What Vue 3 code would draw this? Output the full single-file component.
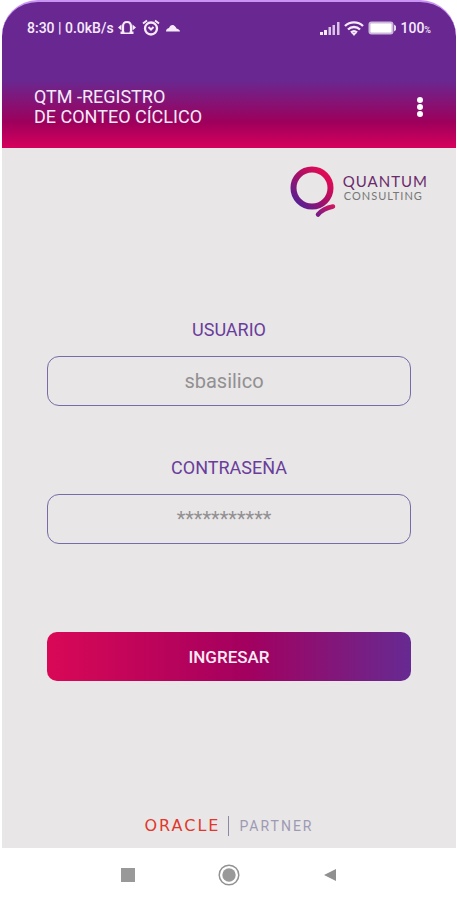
<script setup>
import { ref } from 'vue'

const user = ref('sbasilico')
const password = ref('***********')
</script>

<template>
  <div class="phone">
    <header class="top">
      <div class="status">
        <div class="status-group">
          <span class="clock">8:30 | 0.0kB/s</span>
          <svg class="bell" viewBox="0 0 18 16" aria-hidden="true">
            <path d="M5 12V6.500C5 3.500 6 2 9 2s4 1.500 4 4.500V12" fill="none" stroke="currentColor" stroke-width="2.200" />
            <path d="M2.500 11.500h4v2.500h-4zM11.500 11.500h4v2.500h-4zM6 12.500h6v1.500H6zM3.500 4.500v6L0 7.500zM14.500 4.500v6l3.500-3z" fill="currentColor" />
          </svg>
          <svg class="alarm" viewBox="0 0 18 18" aria-hidden="true">
            <circle cx="9" cy="9.500" r="6" fill="none" stroke="currentColor" stroke-width="2.300" />
            <path d="M1 4.500l4-3M17 4.500l-4-3" stroke="currentColor" stroke-width="2" />
            <path d="M6.500 8L9 10.500 11.500 8" fill="none" stroke="currentColor" stroke-width="2" />
          </svg>
          <svg class="cloud" viewBox="0 0 14 9" aria-hidden="true">
            <path d="M0 7.500c0-2 1-3 3-3.500C4 1.500 6 .5 8 1.500c1.500 1 2 2 2.500 3C12.500 5 14 6 14 7.500z" fill="currentColor" />
          </svg>
        </div>
        <div class="status-group tight">
          <svg class="signal" viewBox="0 0 20 13" fill="currentColor" aria-hidden="true">
            <path d="M0 10h3v3H0zM4 8h3v5H4z" />
            <path d="M8.500 5h2.500v8H8.500zM12.500 3H15v10h-2.500zM17 0h2.500v13H17z" opacity=".8" />
          </svg>
          <svg class="wifi" viewBox="0 0 20 15" fill="none" stroke="currentColor" stroke-width="2.400" aria-hidden="true">
            <path d="M1 5C6 .2 14 .2 19 5M4 8.500c3.500-3.300 8.500-3.300 12 0M7 11.500c1.700-1.500 4.300-1.500 6 0" />
            <path d="M7.500 12h5L10 15z" fill="currentColor" stroke="none" />
          </svg>
          <svg class="battery" viewBox="0 0 28 14" aria-hidden="true">
            <rect x="0.500" y="0.500" width="25" height="13" rx="3" fill="#cdb9dc" />
            <rect x="2.500" y="2.500" width="21" height="9" rx="1" fill="#fff" />
            <path d="M26 3.500l2 1.500v4l-2 1.500z" fill="#e3d5ec" />
          </svg>
          <span class="level">100<small>%</small></span>
        </div>
      </div>
      <div class="bar">
        <h1>QTM -REGISTRO<br />DE CONTEO CÍCLICO</h1>
        <button class="menu" type="button" aria-label="Menú">
          <svg viewBox="0 0 6 20" fill="currentColor" aria-hidden="true">
            <circle cx="3" cy="3" r="3" /><circle cx="3" cy="10" r="3" /><circle cx="3" cy="17" r="3" />
          </svg>
        </button>
      </div>
    </header>

    <main class="content">
      <div class="brand">
        <svg class="brand-mark" viewBox="0 0 46 52" aria-hidden="true">
          <defs>
            <linearGradient id="ring" x1="0" y1="1" x2="1" y2="0">
              <stop offset="0.100" stop-color="#5a1f92" />
              <stop offset="0.500" stop-color="#a80f68" />
              <stop offset="0.850" stop-color="#de0b55" />
            </linearGradient>
            <linearGradient id="tail" x1="0" y1="1" x2="1" y2="0">
              <stop offset="0" stop-color="#7a1a86" />
              <stop offset="1" stop-color="#cf1660" />
            </linearGradient>
          </defs>
          <circle cx="22" cy="22" r="18.500" fill="none" stroke="url(#ring)" stroke-width="6" />
          <path d="M28 48.500Q33 42.500 43 40.500" fill="none" stroke="url(#tail)" stroke-width="4.500" stroke-linecap="round" />
        </svg>
        <div class="brand-text">
          <span class="brand-name">QUANTUM</span>
          <span class="brand-sub">CONSULTING</span>
        </div>
      </div>

      <form class="login" @submit.prevent>
        <div class="field">
          <label for="user">USUARIO</label>
          <input id="user" v-model="user" type="text" autocomplete="off" spellcheck="false" />
        </div>
        <div class="field">
          <label for="password">CONTRASEÑA</label>
          <input id="password" v-model="password" type="text" autocomplete="off" spellcheck="false" />
        </div>
        <button class="submit" type="submit">INGRESAR</button>
      </form>

      <footer class="partner">
        <span class="oracle">ORACLE</span>
        <span class="partner-text">PARTNER</span>
      </footer>
    </main>

    <nav class="keys" aria-label="Navegación">
      <button type="button" aria-label="Recientes">
        <svg viewBox="0 0 22 22"><rect x="4" y="4" width="14" height="14" fill="#999" /></svg>
      </button>
      <button type="button" aria-label="Inicio">
        <svg viewBox="0 0 22 22">
          <circle cx="11" cy="11" r="9.800" fill="none" stroke="#929292" stroke-width="1.500" />
          <circle cx="11" cy="11" r="6.700" fill="#999" />
        </svg>
      </button>
      <button type="button" aria-label="Atrás">
        <svg viewBox="0 0 22 22"><path d="M5 11L17 5v12z" fill="#909090" /></svg>
      </button>
    </nav>
  </div>
</template>

<style>
body {
  margin: 0;
  background: #fff;
}
</style>

<style scoped>
.phone {
  box-sizing: border-box;
  min-height: 100vh;
  padding: 0 1px 0 2px;
  display: flex;
  flex-direction: column;
  font-family: Roboto, "Liberation Sans", sans-serif;
}

button {
  border: 0;
  padding: 0;
  background: none;
  font-family: inherit;
  cursor: pointer;
}

svg {
  display: block;
}

.top {
  border-top: 2px solid #c893f2;
  border-radius: 36px 36px 0 0;
  background: linear-gradient(#692891 0 78px, #9d005c 120px, #d6005c 146px);
  color: #f6eafa;
  padding-bottom: 21px;
}

.status {
  display: flex;
  justify-content: space-between;
  align-items: center;
  height: 52px;
  padding: 0 25px;
}

.status-group {
  display: flex;
  align-items: center;
  gap: 6px;
}

.status-group.tight {
  gap: 4px;
}

.clock,
.level {
  font-size: 14px;
  font-weight: 500;
}

.clock {
  margin-right: -2px;
}

.level small {
  font-size: 9px;
}

.bell {
  width: 18px;
  height: 16px;
}

.alarm {
  width: 18px;
  height: 18px;
}

.cloud {
  width: 14px;
  height: 9px;
}

.signal {
  width: 20px;
  height: 13px;
}

.wifi {
  width: 20px;
  height: 15px;
}

.battery {
  width: 28px;
  height: 14px;
}

.bar {
  display: flex;
  justify-content: space-between;
  align-items: center;
  padding: 33px 33px 0 32px;
}

h1 {
  margin: 0;
  font-size: 18px;
  font-weight: 400;
  line-height: 20px;
}

.menu {
  color: #fff;
}

.menu svg {
  width: 6px;
  height: 20px;
}

.content {
  flex: 1;
  display: flex;
  flex-direction: column;
  background: #e8e6e7;
}

.brand {
  display: flex;
  justify-content: flex-end;
  gap: 7px;
  padding: 18px 28px 0 0;
}

.brand-mark {
  width: 46px;
  height: 52px;
}

.brand-text {
  display: flex;
  flex-direction: column;
  padding-top: 6px;
  font-family: Lato, sans-serif;
}

.brand-name {
  font-size: 15px;
  line-height: 18px;
  letter-spacing: 1px;
  color: #6b2a6c;
}

.brand-sub {
  padding-left: 1px;
  font-size: 11px;
  line-height: 12px;
  letter-spacing: 1px;
  color: #777;
}

.login {
  display: flex;
  flex-direction: column;
  padding: 100px 45px 0;
}

.field {
  display: flex;
  flex-direction: column;
  margin-bottom: 50px;
}

.field label {
  margin-bottom: 14px;
  text-align: center;
  font-size: 18px;
  line-height: 24px;
  color: #6a3d9b;
}

.field input {
  box-sizing: border-box;
  width: 100%;
  height: 50px;
  padding: 0 10px 0 0;
  border: 1px solid #786ba6;
  border-radius: 12px;
  outline: 0;
  background: transparent;
  text-align: center;
  font-family: inherit;
  font-size: 20px;
  color: #929092;
}

.submit {
  height: 49px;
  margin-top: 38px;
  border-radius: 10px;
  background: linear-gradient(90deg, #d90856, #a3005f 55%, #662a92);
  color: #fbeaf3;
  font-size: 17px;
  font-weight: 500;
}

.partner {
  display: flex;
  justify-content: center;
  align-items: center;
  margin-top: auto;
  padding-bottom: 12px;
}

.oracle {
  font-family: "DejaVu Sans", sans-serif;
  font-size: 16px;
  line-height: 20px;
  letter-spacing: 2px;
  color: #e2372b;
  padding-right: 8px;
}

.partner-text {
  border-left: 1px solid #8d89a3;
  padding-left: 10px;
  font-size: 14px;
  line-height: 20px;
  letter-spacing: 2px;
  color: #9d9ab3;
}

.keys {
  display: flex;
  justify-content: center;
  align-items: center;
  gap: 79px;
  height: 52px;
  padding-top: 2px;
  box-sizing: border-box;
}

.keys svg {
  width: 22px;
  height: 22px;
}
</style>
